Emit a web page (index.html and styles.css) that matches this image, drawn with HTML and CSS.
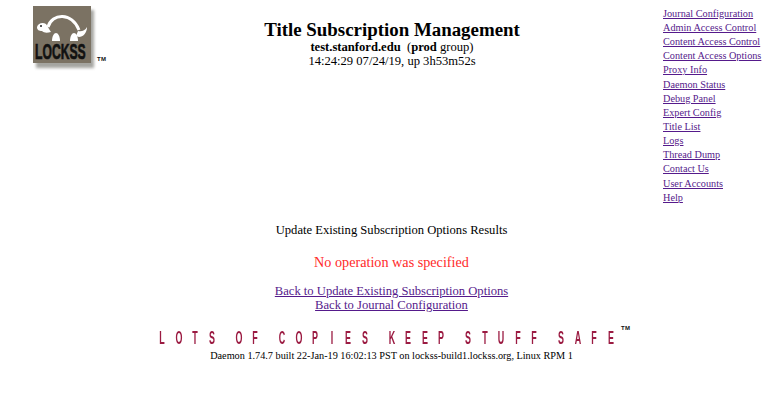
FILE: index.html
```html
<!DOCTYPE html>
<html lang="en">
<head>
<meta charset="utf-8">
<title>Title Subscription Management</title>
<link rel="stylesheet" href="styles.css">
</head>
<body>
<header class="top">
  <div class="logo">
    <svg class="logo-svg" width="80" height="70" viewBox="0 0 80 70" aria-label="LOCKSS">
      <defs>
        <filter id="blur" x="-20%" y="-20%" width="140%" height="140%"><feGaussianBlur stdDeviation="1.6"/></filter>
      </defs>
      <rect x="4" y="4" width="58" height="58" fill="#a5a5a0" filter="url(#blur)"/>
      <rect x="1" y="0" width="58" height="57" fill="#7b7263"/>
      <path d="M16 21 C20 7 40 6 47 24" fill="none" stroke="#fff" stroke-width="3"/>
      <path d="M46 25 C49 26 53 25 55 21 C55 27 51 31 47 31 L44 30 Z" fill="#fff"/>
      <path d="M5 21 C6 17 11 16 14 18 C16 21 17 23 19 26 C15 27 12 27 10 25 C7 25 5 24 5 21 Z" fill="#fff"/>
      <circle cx="9" cy="20" r="1" fill="#222"/>
      <path d="M20 35 C20 30 22 27 24 27 C26 27 28 30 28 35 Z" fill="#fff"/>
      <path d="M38 35 C38 30 40 27 42 27 C44 27 46 30 46 35 Z" fill="#fff"/>
      <text class="logo-word" x="0" y="0" transform="translate(3 53) scale(0.76 1.4)">LOCKSS</text>
    </svg>
    <span class="tm tm-logo">TM</span>
  </div>
  <div class="heading">
    <h1 class="title">Title Subscription Management</h1>
    <div class="host"><b>test.stanford.edu</b> &nbsp;(<b>prod</b> group)</div>
    <div class="time">14:24:29 07/24/19, up 3h53m52s</div>
  </div>
  <nav class="nav">
    <a href="#">Journal Configuration</a>
    <a href="#">Admin Access Control</a>
    <a href="#">Content Access Control</a>
    <a href="#">Content Access Options</a>
    <a href="#">Proxy Info</a>
    <a href="#">Daemon Status</a>
    <a href="#">Debug Panel</a>
    <a href="#">Expert Config</a>
    <a href="#">Title List</a>
    <a href="#">Logs</a>
    <a href="#">Thread Dump</a>
    <a href="#">Contact Us</a>
    <a href="#">User Accounts</a>
    <a href="#">Help</a>
  </nav>
</header>
<main class="content">
  <p class="results">Update Existing Subscription Options Results</p>
  <p class="error">No operation was specified</p>
  <div class="back">
    <a href="#">Back to Update Existing Subscription Options</a>
    <a href="#">Back to Journal Configuration</a>
  </div>
</main>
<footer class="foot">
  <div class="tagline">
    <div class="tag-words">
      <div class="tag-word"><span>L</span><span>O</span><span>T</span><span>S</span></div>
      <div class="tag-word"><span>O</span><span>F</span></div>
      <div class="tag-word"><span>C</span><span>O</span><span>P</span><span>I</span><span>E</span><span>S</span></div>
      <div class="tag-word"><span>K</span><span>E</span><span>E</span><span>P</span></div>
      <div class="tag-word"><span>S</span><span>T</span><span>U</span><span>F</span><span>F</span></div>
      <div class="tag-word"><span>S</span><span>A</span><span>F</span><span>E</span></div>
    </div>
    <span class="tm tm-tag">TM</span>
  </div>
  <div class="build">Daemon 1.74.7 built 22-Jan-19 16:02:13 PST on lockss-build1.lockss.org, Linux RPM 1</div>
</footer>
</body>
</html>
```
FILE: styles.css
```css
html, body { margin: 0; padding: 0; background: #fff; }
body { width: 780px; height: 418px; overflow: hidden; font-family: "Liberation Serif", serif; color: #000; font-size: 12.6px; }
a { color: #551a8b; text-decoration: underline; }
.top { display: flex; height: 204px; }
.logo { width: 167px; flex: none; padding: 6px 0 0 32px; box-sizing: border-box; position: relative; }
.logo-svg { display: block; }
.logo-word { font-family: "Liberation Sans", sans-serif; font-weight: 700; font-size: 16px; fill: #111; stroke: #111; stroke-width: 0.5px; }
.tm { font-family: "Liberation Sans", sans-serif; font-weight: 700; font-size: 6px; color: #111; letter-spacing: 0.3px; }
.tm-logo { position: absolute; left: 97px; top: 56px; }
.heading { width: 450px; flex: none; text-align: center; padding-top: 20px; box-sizing: border-box; }
.title { margin: 0; font-size: 18.9px; line-height: 20px; font-weight: 700; }
.host, .time { font-size: 12.6px; line-height: 14px; }
.nav { display: flex; flex-direction: column; margin-left: 46px; padding-top: 6.75px; font-size: 10.24px; line-height: 14.15px; white-space: nowrap; align-items: flex-start; }
.content { text-align: center; width: 783px; }
.results { margin: 18px 0 0; font-size: 12.6px; line-height: 16px; }
.error { margin: 16px 0 0; font-size: 14.2px; line-height: 17px; color: #ff2a2a; }
.back { margin-top: 13px; display: flex; flex-direction: column; align-items: center; font-size: 12.6px; line-height: 14px; }
.foot { text-align: center; }
.tagline { position: relative; height: 20px; margin-top: 16px; }
.tag-words { display: flex; gap: 10.5px; padding-left: 158px; font-family: "Liberation Sans", sans-serif; font-weight: 700; font-size: 19px; line-height: 20px; color: #9b1b42; }
.tag-word { display: flex; }
.tag-word span { width: 16.5px; transform: scaleX(0.47); transform-origin: 0 0; }
.tm-tag { position: absolute; left: 621px; top: -3px; }
.build { font-size: 10.24px; line-height: 13px; margin-top: 1px; width: 783px; }
```
